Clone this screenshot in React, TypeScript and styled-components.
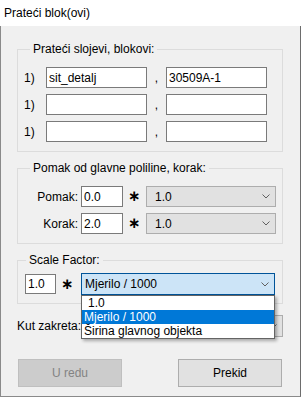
import React from 'react';
import styled, { createGlobalStyle } from 'styled-components';

const GlobalStyle = createGlobalStyle`
  html, body {
    margin: 0;
    padding: 0;
    background: #fff;
  }

  * {
    box-sizing: border-box;
  }
`;

const Window = styled.div`
  width: 301px;
  height: 397px;
  display: flex;
  flex-direction: column;
  font-family: 'Liberation Sans', Arial, sans-serif;
  font-size: 12px;
  color: #000;
`;

const TitleBar = styled.div`
  height: 26px;
  flex: none;
  display: flex;
  align-items: center;
  padding-left: 4px;
  background: #fff;
`;

const Body = styled.div`
  flex: 1;
  display: flex;
  flex-direction: column;
  padding: 15px 17px 0 16px;
  background: #f0f0f0;
  border: 1px solid #8a8a8a;
  border-top: 0;
  border-right-color: #6d6d6d;
`;

const Group = styled.fieldset<{ $top?: number; $pad?: string }>`
  margin: ${(p) => p.$top ?? 0}px 0 0;
  min-width: 0;
  padding: ${(p) => p.$pad ?? '10px 0 9px 0'};
  border: 1px solid #dcdcdc;
`;

const Legend = styled.legend<{ $shift?: number }>`
  margin-left: ${(p) => p.$shift ?? 12}px;
  padding: 0 3px;
  line-height: 16px;
`;

const Rows = styled.div<{ $indent: number }>`
  display: flex;
  flex-direction: column;
  gap: 6px;
  padding-left: ${(p) => p.$indent}px;
`;

const Row = styled.div<{ $height?: number }>`
  display: flex;
  align-items: center;
  height: ${(p) => p.$height ?? 21}px;
`;

const Index = styled.span`
  width: 22px;
`;

const Label = styled.span<{ $width?: number; $right?: boolean }>`
  width: ${(p) => (p.$width ? `${p.$width}px` : 'auto')};
  text-align: ${(p) => (p.$right ? 'right' : 'left')};
  white-space: nowrap;
`;

const Comma = styled.span`
  width: 19px;
  text-align: center;
`;

const Field = styled.div<{ $width: number; $height?: number; $gap?: number }>`
  width: ${(p) => p.$width}px;
  height: ${(p) => p.$height ?? 21}px;
  margin-left: ${(p) => p.$gap ?? 0}px;
  display: flex;
  align-items: center;
  padding-left: 2px;
  background: #fff;
  border: 1px solid #7a7a7a;
  white-space: nowrap;
  overflow: hidden;
`;

const Star = styled.span<{ $width: number }>`
  width: ${(p) => p.$width}px;
  padding-left: 5px;
  font-family: 'DejaVu Sans', sans-serif;
  font-size: 15px;
  font-weight: bold;
  line-height: 1;
`;

const ComboWrap = styled.div`
  position: relative;
`;

const Combo = styled.div<{ $width: number; $height?: number; $focused?: boolean; $indent?: number }>`
  width: ${(p) => p.$width}px;
  height: ${(p) => p.$height ?? 21}px;
  display: flex;
  align-items: center;
  justify-content: space-between;
  padding: 0 5px 0 ${(p) => p.$indent ?? 3}px;
  background: ${(p) => (p.$focused ? '#cce4f7' : '#e1e1e1')};
  border: 1px solid ${(p) => (p.$focused ? '#005499' : '#adadad')};
  white-space: nowrap;
`;

const DropList = styled.ul`
  position: absolute;
  top: 100%;
  left: 0;
  right: 0;
  margin: 0;
  padding: 0;
  list-style: none;
  background: #fff;
  border: 1px solid #646464;
  box-shadow: 2px 2px 3px rgba(0, 0, 0, 0.3);
  z-index: 2;
`;

const Option = styled.li<{ $selected?: boolean; $indent?: number }>`
  height: 14px;
  line-height: 14px;
  padding-left: ${(p) => p.$indent ?? 2}px;
  white-space: nowrap;
  background: ${(p) => (p.$selected ? '#0078d7' : 'transparent')};
  color: ${(p) => (p.$selected ? '#fff' : '#000')};
`;

const AngleRow = styled.div`
  display: flex;
  align-items: center;
  justify-content: space-between;
  height: 22px;
  margin-top: 11px;
`;

const Buttons = styled.div`
  display: flex;
  justify-content: space-between;
  margin-top: 22px;
  padding: 0 1px;
`;

const Button = styled.div<{ $disabled?: boolean }>`
  width: 104px;
  height: 28px;
  display: flex;
  align-items: center;
  justify-content: center;
  background: ${(p) => (p.$disabled ? '#cccccc' : '#e1e1e1')};
  border: 1px solid ${(p) => (p.$disabled ? '#bfbfbf' : '#adadad')};
  color: ${(p) => (p.$disabled ? '#838383' : '#000')};
`;

const Chevron = () => (
  <svg width="8" height="5" viewBox="0 0 8 5">
    <path d="M0.5 0.5 L4 4 L7.5 0.5" fill="none" stroke="#606060" strokeWidth="1" />
  </svg>
);

const layers = [
  ['sit_detalj', '30509A-1'],
  ['', ''],
  ['', ''],
];

const offsets = [
  { label: 'Pomak:', value: '0.0' },
  { label: 'Korak:', value: '2.0' },
];

const scaleOptions = ['1.0', 'Mjerilo / 1000', 'Širina glavnog objekta'];

const App = () => {
  return (
    <>
      <GlobalStyle />
      <Window>
        <TitleBar>Prateći blok(ovi)</TitleBar>
        <Body>
          <Group>
            <Legend>Prateći slojevi, blokovi:</Legend>
            <Rows $indent={6}>
              {layers.map((row, i) => (
                <Row key={i}>
                  <Index>1)</Index>
                  <Field $width={101}>{row[0]}</Field>
                  <Comma>,</Comma>
                  <Field $width={101}>{row[1]}</Field>
                </Row>
              ))}
            </Rows>
          </Group>

          <Group $top={8}>
            <Legend>Pomak od glavne poliline, korak:</Legend>
            <Rows $indent={0}>
              {offsets.map((o) => (
                <Row key={o.label}>
                  <Label $width={60} $right>
                    {o.label}
                  </Label>
                  <Field $width={42} $gap={3}>
                    {o.value}
                  </Field>
                  <Star $width={23}>∗</Star>
                  <Combo $width={130} $indent={8}>
                    <span>1.0</span>
                    <Chevron />
                  </Combo>
                </Row>
              ))}
            </Rows>
          </Group>

          <Group $top={8} $pad="5px 0 8px 0">
            <Legend $shift={8}>Scale Factor:</Legend>
            <Rows $indent={7}>
              <Row $height={22}>
                <Field $width={31} $height={20}>
                  1.0
                </Field>
                <Star $width={25}>∗</Star>
                <ComboWrap>
                  <Combo $width={194} $height={22} $focused>
                    <span>Mjerilo / 1000</span>
                    <Chevron />
                  </Combo>
                  <DropList>
                    {scaleOptions.map((opt, i) => (
                      <Option key={opt} $selected={i === 1} $indent={i === 0 ? 6 : 2}>
                        {opt}
                      </Option>
                    ))}
                  </DropList>
                </ComboWrap>
              </Row>
            </Rows>
          </Group>

          <AngleRow>
            <Label>Kut zakreta:</Label>
            <Combo $width={197} $height={22}>
              <span />
              <Chevron />
            </Combo>
          </AngleRow>

          <Buttons>
            <Button $disabled>U redu</Button>
            <Button>Prekid</Button>
          </Buttons>
        </Body>
      </Window>
    </>
  );
};

export default App;
